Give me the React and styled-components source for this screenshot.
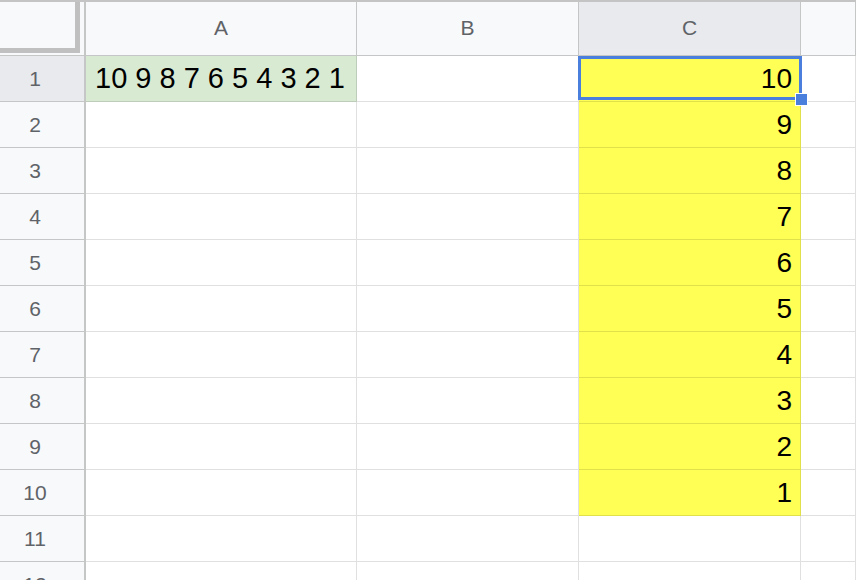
import React from "react";
import styled, { createGlobalStyle, css } from "styled-components";

const GlobalStyle = createGlobalStyle`
  html, body {
    margin: 0;
    padding: 0;
    background: #ffffff;
    overflow: hidden;
  }
  body {
    font-family: Arial, "Liberation Sans", sans-serif;
  }
`;

const headerBg = "#f8f9fa";
const selectedHeaderBg = "#e8eaed";
const headerLine = "#c4c7c5";
const gridLine = "rgba(0, 0, 0, 0.12)";
const selectBlue = "#4a7fde";

const Sheet = styled.div`
  display: grid;
  grid-template-columns: 86px 271px 222px 222px 1fr;
  grid-template-rows: 54px repeat(12, 46px);
  width: 856px;
  height: 580px;
  overflow: hidden;
  border-top: 2px solid #c4c4c4;
  box-sizing: border-box;
`;

const Corner = styled.div`
  background: ${headerBg};
  border-right: 2px solid ${headerLine};
  border-bottom: 1px solid ${headerLine};
  box-sizing: border-box;
  padding-right: 4px;
  padding-bottom: 2px;
  display: flex;
`;

const FreezeBox = styled.div`
  flex: 1;
  border-right: 5px solid #c0c0c0;
  border-bottom: 5px solid #c0c0c0;
  margin-top: -2px;
`;

const ColHead = styled.div`
  background: ${(p) => (p.$active ? selectedHeaderBg : headerBg)};
  border-right: 1px solid ${headerLine};
  border-bottom: 1px solid ${headerLine};
  box-sizing: border-box;
  display: flex;
  align-items: center;
  justify-content: center;
  color: #5f6368;
  font-size: 21px;
  margin-top: -2px;
`;

const RowHead = styled.div`
  background: ${(p) => (p.$active ? selectedHeaderBg : headerBg)};
  border-right: 2px solid ${headerLine};
  border-bottom: 1px solid ${headerLine};
  box-sizing: border-box;
  display: flex;
  align-items: center;
  justify-content: center;
  padding-right: 14px;
  color: #5f6368;
  font-size: 21px;
`;

const Cell = styled.div`
  position: relative;
  background: ${(p) => p.$bg || "#ffffff"};
  border-right: 1px solid ${gridLine};
  border-bottom: 1px solid ${gridLine};
  box-sizing: border-box;
  color: #000000;
  font-size: ${(p) => (p.$right ? "28px" : "29px")};
  line-height: 45px;
  white-space: nowrap;
  overflow: visible;
  padding: 0 9px 0 9px;
  text-align: ${(p) => (p.$right ? "right" : "left")};
  ${(p) =>
    p.$right &&
    css`
      padding-right: 8px;
    `}
`;

const Selection = styled.div`
  position: absolute;
  z-index: 2;
  top: 0;
  left: -1px;
  right: -2px;
  bottom: 1px;
  border: 3px solid ${selectBlue};
  pointer-events: none;
`;

const Handle = styled.div`
  position: absolute;
  right: -9px;
  bottom: -9px;
  width: 11px;
  height: 11px;
  background: ${selectBlue};
  border: 1px solid #ffffff;
`;

const yellow = "#ffff55";
const green = "#d9ead3";
const columns = ["A", "B", "C", ""];
const rows = Array.from({ length: 12 }, (_, i) => i + 1);

const App = () => {
  return (
    <>
      <GlobalStyle />
      <Sheet>
        <Corner>
          <FreezeBox />
        </Corner>
        {columns.map((c) => (
          <ColHead key={c || "D"} $active={c === "C"}>
            {c}
          </ColHead>
        ))}

        {rows.map((r) => (
          <React.Fragment key={r}>
            <RowHead $active={r === 1}>{r}</RowHead>
            <Cell $bg={r === 1 ? green : null}>
              {r === 1 ? "10 9 8 7 6 5 4 3 2 1" : ""}
            </Cell>
            <Cell />
            <Cell $bg={r <= 10 ? yellow : null} $right>
              {r <= 10 ? 11 - r : ""}
              {r === 1 && (
                <Selection>
                  <Handle />
                </Selection>
              )}
            </Cell>
            <Cell />
          </React.Fragment>
        ))}
      </Sheet>
    </>
  );
};

export default App;
